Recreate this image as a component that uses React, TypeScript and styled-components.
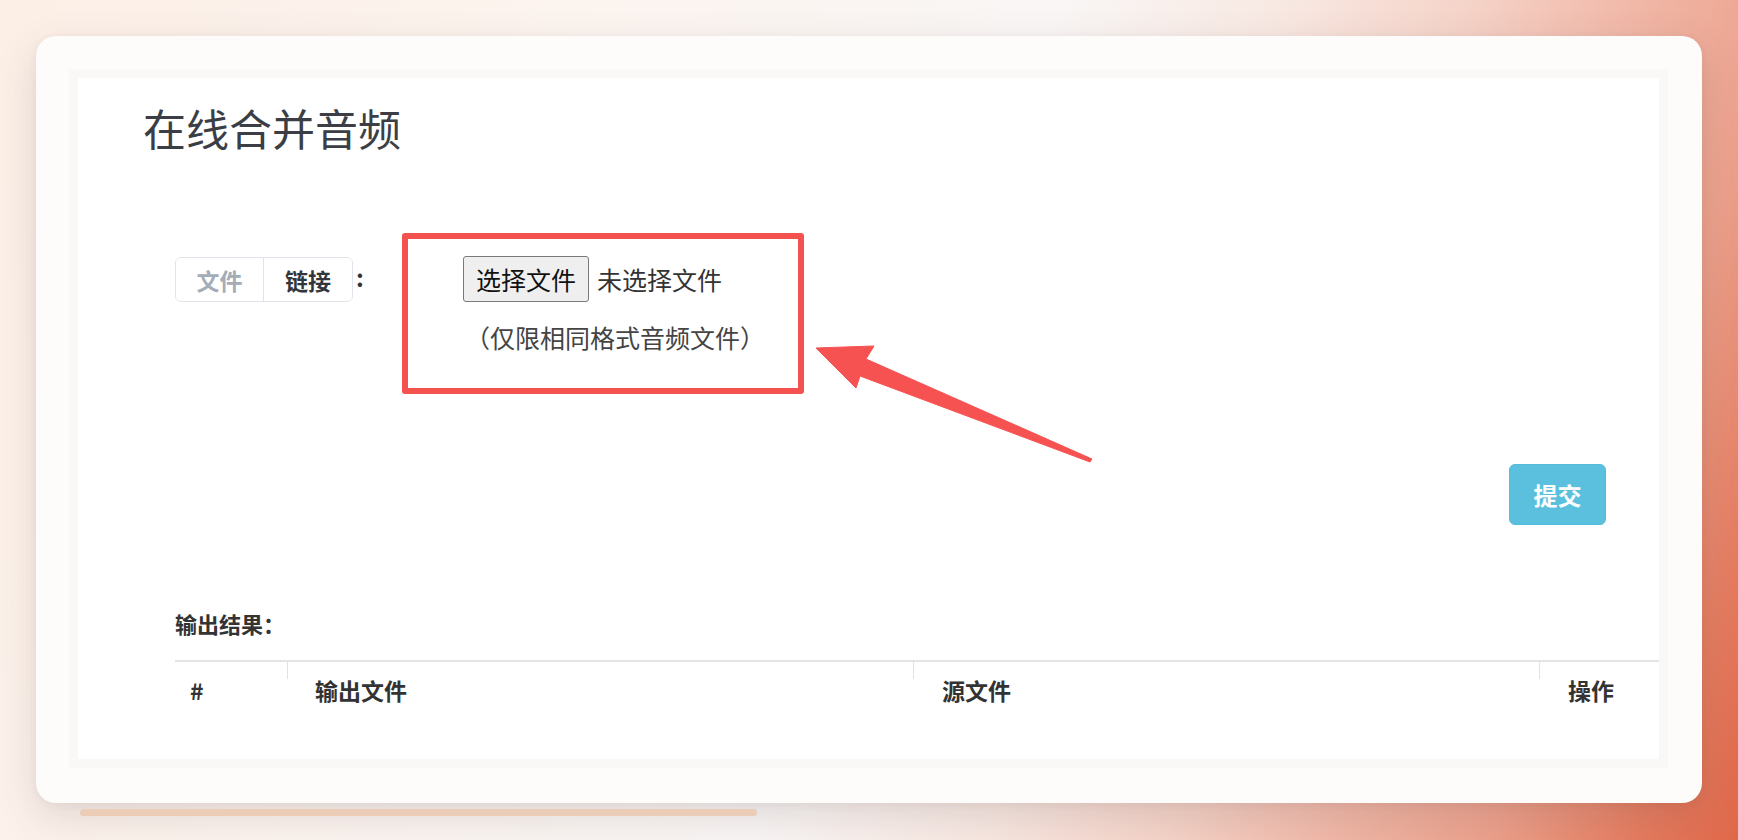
import React from "react";
import styled, { createGlobalStyle } from "styled-components";

const Global = createGlobalStyle`
  html, body {
    margin: 0;
    padding: 0;
    width: 1738px;
    height: 840px;
    overflow: hidden;
  }
  body {
    font-family: "Noto Sans CJK SC", "Noto Sans", sans-serif;
  }
  * { box-sizing: border-box; }
`;

const Page = styled.div`
  position: relative;
  width: 1738px;
  height: 840px;
  padding: 36px 36px 0 36px;
  background: linear-gradient(
    110deg,
    #fcefe6 0%,
    #fcf4ef 28%,
    #f9f6f5 52%,
    #f8e8e2 63%,
    #f5d3c8 72%,
    #f1b8a8 80%,
    #eca08b 88%,
    #e57c60 95%,
    #e0684a 100%
  );
`;

const Card = styled.div`
  width: 1666px;
  height: 767px;
  border-radius: 20px;
  background: #fdfcfb;
  padding: 33px 34px 35px 33px;
  box-shadow: 0 14px 42px rgba(90, 70, 70, 0.16), 0 2px 8px rgba(90, 70, 70, 0.06);
`;

const Band = styled.div`
  height: 100%;
  border: 9px solid #faf8f7;
  background: #ffffff;
`;

const Panel = styled.div`
  padding-top: 23px;
  display: flex;
  flex-direction: column;
`;

const Title = styled.h1`
  margin: 0 0 0 65px;
  font-size: 43px;
  line-height: 52px;
  font-weight: 400;
  color: #3b3f45;
`;

const FormRow = styled.div`
  display: flex;
  align-items: flex-start;
  margin: 80px 0 0 97px;
`;

const Tabs = styled.div`
  display: flex;
  margin-top: 24px;
  height: 45px;
  border: 1px solid #dfe4ea;
  border-radius: 6px;
  overflow: hidden;
`;

const Tab = styled.div<{ $active?: boolean; $first?: boolean }>`
  width: 88px;
  display: flex;
  align-items: center;
  justify-content: center;
  font-size: 23px;
  font-weight: 700;
  color: ${(p) => (p.$active ? "#a3acb7" : "#32363b")};
  border-right: ${(p) => (p.$first ? "1px solid #dfe4ea" : "none")};
  background: #fff;
`;

const Colon = styled.div`
  width: 16px;
  margin: 22px 0 0 3px;
  line-height: 44px;
  font-size: 24px;
  font-weight: 700;
  color: #333;
`;

const RedBox = styled.div`
  margin-left: 30px;
  width: 402px;
  height: 161px;
  border: 6px solid #f4524f;
  border-radius: 3px;
  padding: 17px 0 0 55px;
`;

const FileRow = styled.div`
  display: flex;
  align-items: center;
  gap: 8px;
`;

const FileButton = styled.button`
  height: 46px;
  padding: 0 12px;
  font-family: inherit;
  font-size: 25px;
  line-height: 1;
  color: #111;
  background: #efefef;
  border: 1px solid #7a7a7a;
  border-radius: 3px;
`;

const NoFile = styled.span`
  font-size: 25px;
  color: #333;
`;

const Hint = styled.div`
  margin: 19px 0 0 2px;
  font-size: 25px;
  line-height: 32px;
  color: #444;
`;

const SubmitRow = styled.div`
  display: flex;
  justify-content: flex-end;
  padding-right: 53px;
  margin-top: 70px;
`;

const SubmitButton = styled.button`
  width: 97px;
  height: 61px;
  background: #5bc0de;
  border: 1px solid #52bcdc;
  border-radius: 6px;
  color: #fff;
  font-family: inherit;
  font-size: 24px;
  font-weight: 700;
`;

const ResultLabel = styled.div`
  margin: 83px 0 0 97px;
  font-size: 22px;
  line-height: 30px;
  font-weight: 700;
  color: #333;
`;

const Table = styled.div`
  margin: 22px 0 0 97px;
  border-top: 2px solid #e4e4e4;
  display: grid;
  grid-template-columns: 112px 626px 626px 1fr;
`;

const HeadCell = styled.div<{ $pad: number; $divider?: boolean }>`
  position: relative;
  height: 56px;
  display: flex;
  align-items: center;
  padding-left: ${(p) => p.$pad}px;
  font-size: 23px;
  font-weight: 700;
  color: #333;
  &::before {
    content: "";
    display: ${(p) => (p.$divider ? "block" : "none")};
    position: absolute;
    left: 0;
    top: 0;
    width: 1px;
    height: 17px;
    background: #e2e2e2;
  }
`;

const BottomBar = styled.div`
  margin: 6px 0 0 44px;
  width: 677px;
  height: 7px;
  border-radius: 4px;
  background: #ebccb6;
`;

const ArrowLayer = styled.svg`
  position: absolute;
  left: 0;
  top: 0;
  width: 1738px;
  height: 840px;
  pointer-events: none;
`;

export default function App() {
  return (
    <>
      <Global />
      <Page>
        <Card>
          <Band>
            <Panel>
              <Title>在线合并音频</Title>
              <FormRow>
                <Tabs>
                  <Tab $active $first>文件</Tab>
                  <Tab>链接</Tab>
                </Tabs>
                <Colon>:</Colon>
                <RedBox>
                  <FileRow>
                    <FileButton>选择文件</FileButton>
                    <NoFile>未选择文件</NoFile>
                  </FileRow>
                  <Hint>（仅限相同格式音频文件）</Hint>
                </RedBox>
              </FormRow>
              <SubmitRow>
                <SubmitButton>提交</SubmitButton>
              </SubmitRow>
              <ResultLabel>输出结果：</ResultLabel>
              <Table>
                <HeadCell $pad={15}>#</HeadCell>
                <HeadCell $pad={28} $divider>输出文件</HeadCell>
                <HeadCell $pad={29} $divider>源文件</HeadCell>
                <HeadCell $pad={29} $divider>操作</HeadCell>
              </Table>
            </Panel>
          </Band>
        </Card>
        <BottomBar />
        <ArrowLayer viewBox="0 0 1738 840">
          <polygon
            points="816,348 874,346 866,359 1092,459 1090,462 860,376 856,388"
            fill="#f65251"
            stroke="#f65251"
            strokeWidth="1"
            strokeLinejoin="round"
          />
        </ArrowLayer>
      </Page>
    </>
  );
}
